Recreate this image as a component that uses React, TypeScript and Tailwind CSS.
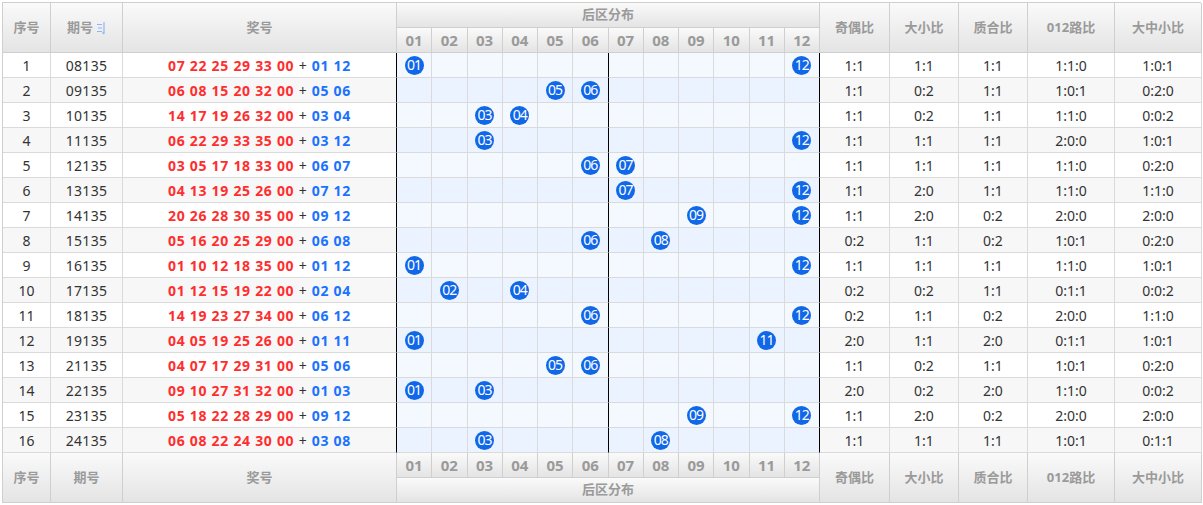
import React from 'react';

type Row = {
  issue: string;
  front: string[];
  back: string[];
  ratios: string[];
};

const data: Row[] = [
  { issue: '08135', front: ['07', '22', '25', '29', '33', '00'], back: ['01', '12'], ratios: ['1:1', '1:1', '1:1', '1:1:0', '1:0:1'] },
  { issue: '09135', front: ['06', '08', '15', '20', '32', '00'], back: ['05', '06'], ratios: ['1:1', '0:2', '1:1', '1:0:1', '0:2:0'] },
  { issue: '10135', front: ['14', '17', '19', '26', '32', '00'], back: ['03', '04'], ratios: ['1:1', '0:2', '1:1', '1:1:0', '0:0:2'] },
  { issue: '11135', front: ['06', '22', '29', '33', '35', '00'], back: ['03', '12'], ratios: ['1:1', '1:1', '1:1', '2:0:0', '1:0:1'] },
  { issue: '12135', front: ['03', '05', '17', '18', '33', '00'], back: ['06', '07'], ratios: ['1:1', '1:1', '1:1', '1:1:0', '0:2:0'] },
  { issue: '13135', front: ['04', '13', '19', '25', '26', '00'], back: ['07', '12'], ratios: ['1:1', '2:0', '1:1', '1:1:0', '1:1:0'] },
  { issue: '14135', front: ['20', '26', '28', '30', '35', '00'], back: ['09', '12'], ratios: ['1:1', '2:0', '0:2', '2:0:0', '2:0:0'] },
  { issue: '15135', front: ['05', '16', '20', '25', '29', '00'], back: ['06', '08'], ratios: ['0:2', '1:1', '0:2', '1:0:1', '0:2:0'] },
  { issue: '16135', front: ['01', '10', '12', '18', '35', '00'], back: ['01', '12'], ratios: ['1:1', '1:1', '1:1', '1:1:0', '1:0:1'] },
  { issue: '17135', front: ['01', '12', '15', '19', '22', '00'], back: ['02', '04'], ratios: ['0:2', '0:2', '1:1', '0:1:1', '0:0:2'] },
  { issue: '18135', front: ['14', '19', '23', '27', '34', '00'], back: ['06', '12'], ratios: ['0:2', '1:1', '0:2', '2:0:0', '1:1:0'] },
  { issue: '19135', front: ['04', '05', '19', '25', '26', '00'], back: ['01', '11'], ratios: ['2:0', '1:1', '2:0', '0:1:1', '1:0:1'] },
  { issue: '21135', front: ['04', '07', '17', '29', '31', '00'], back: ['05', '06'], ratios: ['1:1', '0:2', '1:1', '1:0:1', '0:2:0'] },
  { issue: '22135', front: ['09', '10', '27', '31', '32', '00'], back: ['01', '03'], ratios: ['2:0', '0:2', '2:0', '1:1:0', '0:0:2'] },
  { issue: '23135', front: ['05', '18', '22', '28', '29', '00'], back: ['09', '12'], ratios: ['1:1', '2:0', '0:2', '2:0:0', '2:0:0'] },
  { issue: '24135', front: ['06', '08', '22', '24', '30', '00'], back: ['03', '08'], ratios: ['1:1', '1:1', '1:1', '1:0:1', '0:1:1'] },
];

const nums = ['01', '02', '03', '04', '05', '06', '07', '08', '09', '10', '11', '12'];
const ratioHeads = ['奇偶比', '大小比', '质合比', '012路比', '大中小比'];

const head =
  'flex items-center justify-center box-border border-r border-b border-[#cfcfcf] bg-linear-to-b from-[#fafafa] to-[#e4e4e4] text-[13px] font-bold text-[#9a9a9a]';

function SortIcon() {
  return (
    <svg width="10" height="14" viewBox="0 0 10 14" className="ml-[3px]">
      <g stroke="#8fb4f7" strokeWidth="1.2" fill="none">
        <path d="M1 3.5h5M2 7h4M1 10.5h5" />
        <path d="M8 1v12M6.5 11.5L8 13" />
      </g>
    </svg>
  );
}

function cell(black: boolean) {
  return black
    ? 'box-border border-r border-b border-r-black border-b-[#dadada]'
    : 'box-border border-r border-b border-[#dadada]';
}

function Header({ bottom }: { bottom?: boolean }) {
  const dist = (
    <div className={`${head} col-start-4 col-span-12 h-[25px]`}>后区分布</div>
  );
  const numRow = nums.map((n) => (
    <div key={n} className={`${head} h-[25px] text-[15px]`}>
      {n}
    </div>
  ));
  const ratios = ratioHeads.map((h) => (
    <div key={h} className={`${head} row-span-2`}>
      {h}
    </div>
  ));
  return (
    <>
      <div className={`${head} row-span-2`}>序号</div>
      <div className={`${head} row-span-2 ${bottom ? '' : 'text-[#7ea8f4]'}`}>
        期号{!bottom && <SortIcon />}
      </div>
      <div className={`${head} row-span-2`}>奖号</div>
      {bottom ? (
        <>
          {numRow}
          {ratios}
          {dist}
        </>
      ) : (
        <>
          {dist}
          {ratios}
          {numRow}
        </>
      )}
    </>
  );
}

export default function App() {
  return (
    <div className="w-[1203px] h-[505px] bg-white pl-[2px] pt-[2px]" style={{ fontFamily: '"Noto Sans", "Noto Sans CJK SC", sans-serif' }}>
      <div className="grid w-[1199px] grid-cols-[48px_72px_274px_repeat(12,35.25px)_70px_69px_69px_87px_87px] auto-rows-[25px] border-l border-t border-[#cfcfcf] text-[14px] text-[#333]">
        <Header />
        {data.map((r, i) => {
          const even = i % 2 === 1;
          const plain = even ? 'bg-[#f7f7f7]' : 'bg-white';
          const blue = even ? 'bg-[#eaf3ff]' : 'bg-[#f4f8ff]';
          return (
            <React.Fragment key={r.issue}>
              <div className={`${cell(false)} ${plain} flex items-center justify-center`}>{i + 1}</div>
              <div className={`${cell(false)} ${plain} flex items-center justify-center tracking-[0.3px]`}>{r.issue}</div>
              <div className={`${cell(true)} ${plain} flex items-center justify-center whitespace-pre tracking-[0.7px]`}>
                <span className="font-bold text-[#ff2e2e]">{r.front.join(' ')}</span>
                <span className="text-[#333]"> + </span>
                <span className="font-bold text-[#1a72ff]">{r.back.join(' ')}</span>
              </div>
              {nums.map((n, j) => (
                <div key={n} className={`${cell(j === 5 || j === 11)} ${blue} flex items-center justify-center`}>
                  {r.back.includes(n) && (
                    <span className="flex h-[19px] w-[19px] items-center justify-center rounded-full bg-[#1067e8] text-[14px] leading-none tracking-[-1px] text-white">
                      {n}
                    </span>
                  )}
                </div>
              ))}
              {r.ratios.map((v, j) => (
                <div key={j} className={`${cell(false)} ${plain} flex items-center justify-center`}>
                  {v}
                </div>
              ))}
            </React.Fragment>
          );
        })}
        <Header bottom />
      </div>
    </div>
  );
}
